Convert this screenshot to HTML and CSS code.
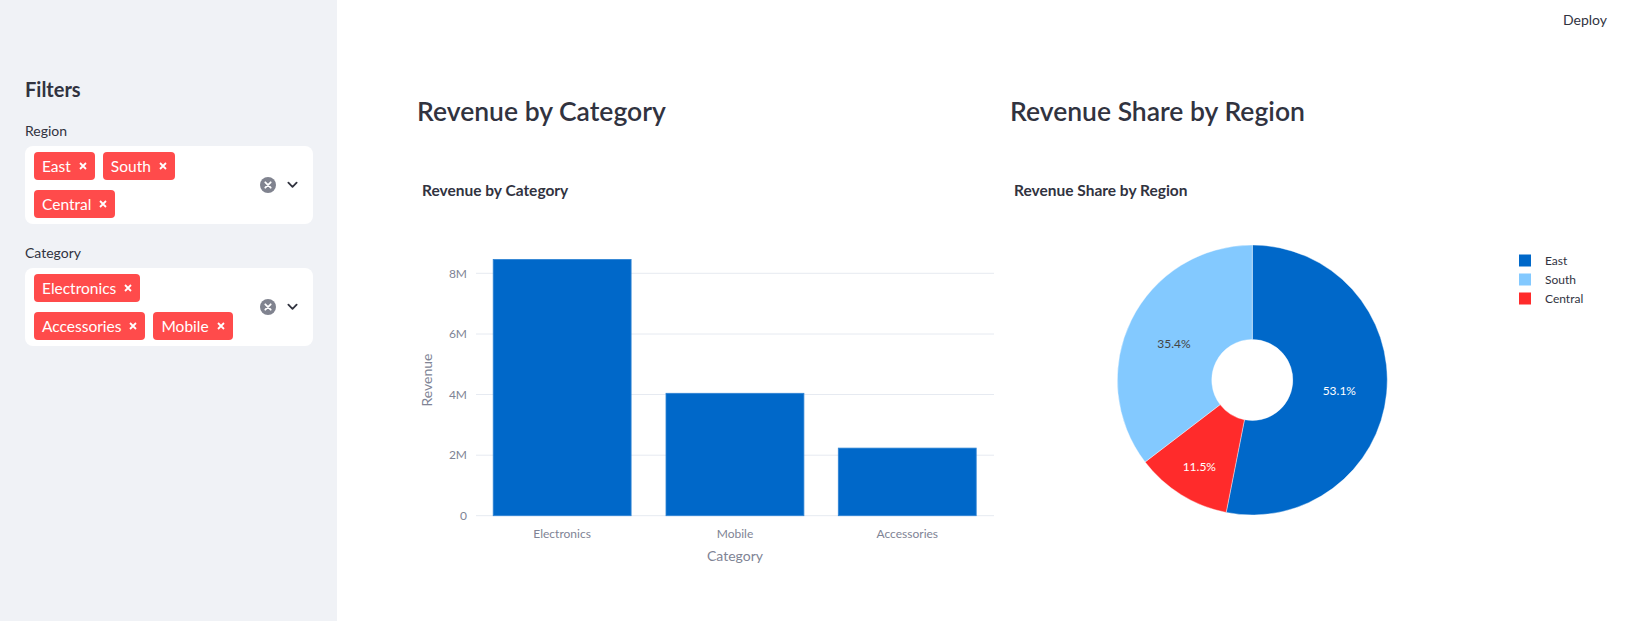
FILE: index.html
```html
<!DOCTYPE html>
<html lang="en">
<head>
<meta charset="utf-8">
<title>Dashboard</title>
<link rel="stylesheet" href="styles.css">
</head>
<body>
<div class="app">
  <aside class="sidebar">
    <h2 class="sb-title">Filters</h2>
    <div class="field">
      <label class="field-label">Region</label>
      <div class="select">
        <div class="tags">
          <span class="tag">East<svg class="tag-x" viewBox="0 0 8 8"><path d="M1 1L7 7M7 1L1 7"/></svg></span>
          <span class="tag">South<svg class="tag-x" viewBox="0 0 8 8"><path d="M1 1L7 7M7 1L1 7"/></svg></span>
          <span class="tag">Central<svg class="tag-x" viewBox="0 0 8 8"><path d="M1 1L7 7M7 1L1 7"/></svg></span>
        </div>
        <div class="controls">
          <svg class="clear" viewBox="0 0 16 16"><circle cx="8" cy="8" r="8"/><path d="M5.3 5.3L10.7 10.7M10.7 5.3L5.3 10.7"/></svg>
          <svg class="chev" viewBox="0 0 12 8"><path d="M1.5 1.5L6 6L10.5 1.5"/></svg>
        </div>
      </div>
    </div>
    <div class="field">
      <label class="field-label">Category</label>
      <div class="select">
        <div class="tags">
          <span class="tag">Electronics<svg class="tag-x" viewBox="0 0 8 8"><path d="M1 1L7 7M7 1L1 7"/></svg></span>
          <span class="tag">Accessories<svg class="tag-x" viewBox="0 0 8 8"><path d="M1 1L7 7M7 1L1 7"/></svg></span>
          <span class="tag">Mobile<svg class="tag-x" viewBox="0 0 8 8"><path d="M1 1L7 7M7 1L1 7"/></svg></span>
        </div>
        <div class="controls">
          <svg class="clear" viewBox="0 0 16 16"><circle cx="8" cy="8" r="8"/><path d="M5.3 5.3L10.7 10.7M10.7 5.3L5.3 10.7"/></svg>
          <svg class="chev" viewBox="0 0 12 8"><path d="M1.5 1.5L6 6L10.5 1.5"/></svg>
        </div>
      </div>
    </div>
  </aside>

  <main class="main">
    <header class="topbar"><span class="deploy">Deploy</span></header>
    <div class="content">
      <section class="col">
        <h2 class="heading">Revenue by Category</h2>
        <svg class="chart" viewBox="0 0 577 420" width="577" height="420">
          <text class="chart-title" x="5" y="36">Revenue by Category</text>
          <g class="grid">
            <line x1="59" x2="577" y1="113.3" y2="113.3"/>
            <line x1="59" x2="577" y1="174" y2="174"/>
            <line x1="59" x2="577" y1="234.5" y2="234.5"/>
            <line x1="59" x2="577" y1="295.2" y2="295.2"/>
            <line x1="59" x2="577" y1="355.7" y2="355.7"/>
          </g>
          <g class="ticks">
            <text x="50" y="117.5">8M</text>
            <text x="50" y="178.2">6M</text>
            <text x="50" y="238.7">4M</text>
            <text x="50" y="299.4">2M</text>
            <text x="50" y="359.9">0</text>
          </g>
          <g class="bars">
            <rect x="76.2" y="99.4" width="137.9" height="256.3"/>
            <rect x="249" y="233.3" width="137.9" height="122.4"/>
            <rect x="421.3" y="288.1" width="137.9" height="67.6"/>
          </g>
          <g class="xticks">
            <text x="145.1" y="377.5">Electronics</text>
            <text x="318" y="377.5">Mobile</text>
            <text x="490.3" y="377.5">Accessories</text>
          </g>
          <text class="axis-title" x="318" y="401">Category</text>
          <text class="axis-title" transform="translate(14.5 220) rotate(-90)" x="0" y="0">Revenue</text>
        </svg>
      </section>

      <section class="col">
        <h2 class="heading">Revenue Share by Region</h2>
        <svg class="chart" viewBox="0 0 577 420" width="577" height="420">
          <text class="chart-title" x="4" y="36">Revenue Share by Region</text>
          <g class="pie">
            <path class="east" d="M242.3 85 A135 135 0 1 1 216.17 352.45 L234.46 259.73 A40.5 40.5 0 1 0 242.3 179.5 Z"/>
            <path class="central" d="M216.17 352.45 A135 135 0 0 1 135.08 302.03 L210.13 244.61 A40.5 40.5 0 0 0 234.46 259.73 Z"/>
            <path class="south" d="M135.08 302.03 A135 135 0 0 1 242.3 85 L242.3 179.5 A40.5 40.5 0 0 0 210.13 244.61 Z"/>
          </g>
          <g class="pie-labels">
            <text class="light" x="329.3" y="235">53.1%</text>
            <text class="dark" x="164" y="187.5">35.4%</text>
            <text class="light" x="189.3" y="311">11.5%</text>
          </g>
          <g class="legend">
            <rect class="east" x="509" y="94.5" width="12" height="12"/>
            <text x="535" y="105">East</text>
            <rect class="south" x="509" y="113.5" width="12" height="12"/>
            <text x="535" y="124">South</text>
            <rect class="central" x="509" y="132.5" width="12" height="12"/>
            <text x="535" y="143">Central</text>
          </g>
        </svg>
      </section>
    </div>
  </main>
</div>
</body>
</html>
```

FILE: styles.css
```css
* { box-sizing: border-box; }

html, body {
  margin: 0;
  padding: 0;
  height: 100%;
  overflow: hidden;
  background: #ffffff;
  font-family: "Lato", "Noto Sans", "Liberation Sans", sans-serif;
  color: #31333f;
}

.app {
  display: flex;
  min-height: 100vh;
}

/* ---------- sidebar ---------- */
.sidebar {
  width: 337px;
  flex: 0 0 337px;
  background: #f0f2f6;
  padding: 77px 24px 0 25px;
}

.sb-title {
  margin: 0;
  font-size: 20px;
  line-height: 24px;
  font-weight: 700;
  color: #31333f;
}

.field { margin-top: 19px; }
.sb-title + .field { margin-top: 20px; }

.field-label {
  display: block;
  font-size: 14px;
  line-height: 20px;
  margin-bottom: 5px;
  color: #31333f;
}

.select {
  display: flex;
  align-items: center;
  background: #ffffff;
  border-radius: 8px;
  padding: 6px 15px 6px 9px;
}

.tags {
  display: flex;
  flex-wrap: wrap;
  row-gap: 10px;
  column-gap: 8px;
  max-width: 215px;
}

.tag {
  display: inline-flex;
  align-items: center;
  gap: 8px;
  height: 28px;
  padding: 0 8px 0 8px;
  background: #ff4b4b;
  color: #ffffff;
  border-radius: 4px;
  font-size: 15.5px;
  line-height: 28px;
}

.tag-x {
  width: 8px;
  height: 8px;
  stroke: #ffffff;
  stroke-width: 1.8;
  fill: none;
}

.controls {
  margin-left: auto;
  display: flex;
  align-items: center;
  gap: 11px;
}

.clear {
  width: 16px;
  height: 16px;
}
.clear circle { fill: #80838f; }
.clear path { stroke: #ffffff; stroke-width: 1.8; fill: none; stroke-linecap: round; }

.chev {
  width: 11px;
  height: 8px;
  fill: none;
  stroke: #31333f;
  stroke-width: 2;
  stroke-linecap: round;
  stroke-linejoin: round;
}

/* ---------- main ---------- */
.main {
  flex: 1;
  display: flex;
  flex-direction: column;
}

.topbar {
  height: 38px;
  display: flex;
  align-items: center;
  justify-content: flex-end;
  padding-right: 26px;
}

.deploy {
  font-size: 14px;
  color: #31333f;
}

.content {
  display: grid;
  grid-template-columns: 577px 577px;
  column-gap: 16px;
  padding: 57px 0 0 80px;
}

.heading {
  margin: 0;
  font-size: 26.5px;
  line-height: 33.6px;
  font-weight: 600;
  color: #31333f;
}

.chart {
  display: block;
  margin-top: 31.7px;
  font-family: "Lato", "Noto Sans", "Liberation Sans", sans-serif;
}

.chart-title {
  font-size: 15.5px;
  font-weight: 700;
  fill: #31333f;
}

.grid line {
  stroke: #e6eaf1;
  stroke-width: 1;
}

.ticks text {
  font-size: 12px;
  fill: #808495;
  text-anchor: end;
}

.bars rect {
  fill: #0068c9;
  stroke: #2f84d4;
  stroke-width: 0.8;
}

.xticks text {
  font-size: 12px;
  fill: #808495;
  text-anchor: middle;
}

.axis-title {
  font-size: 14px;
  fill: #808495;
  text-anchor: middle;
}

.pie path { stroke: #ffffff; stroke-width: 0.4; }
.east { fill: #0068c9; }
.south { fill: #83c9ff; }
.central { fill: #ff2b2b; }

.pie-labels text {
  font-size: 12px;
  text-anchor: middle;
}
.pie-labels .light { fill: #ffffff; }
.pie-labels .dark { fill: #444444; }

.legend text {
  font-size: 12px;
  fill: #31333f;
}
```
